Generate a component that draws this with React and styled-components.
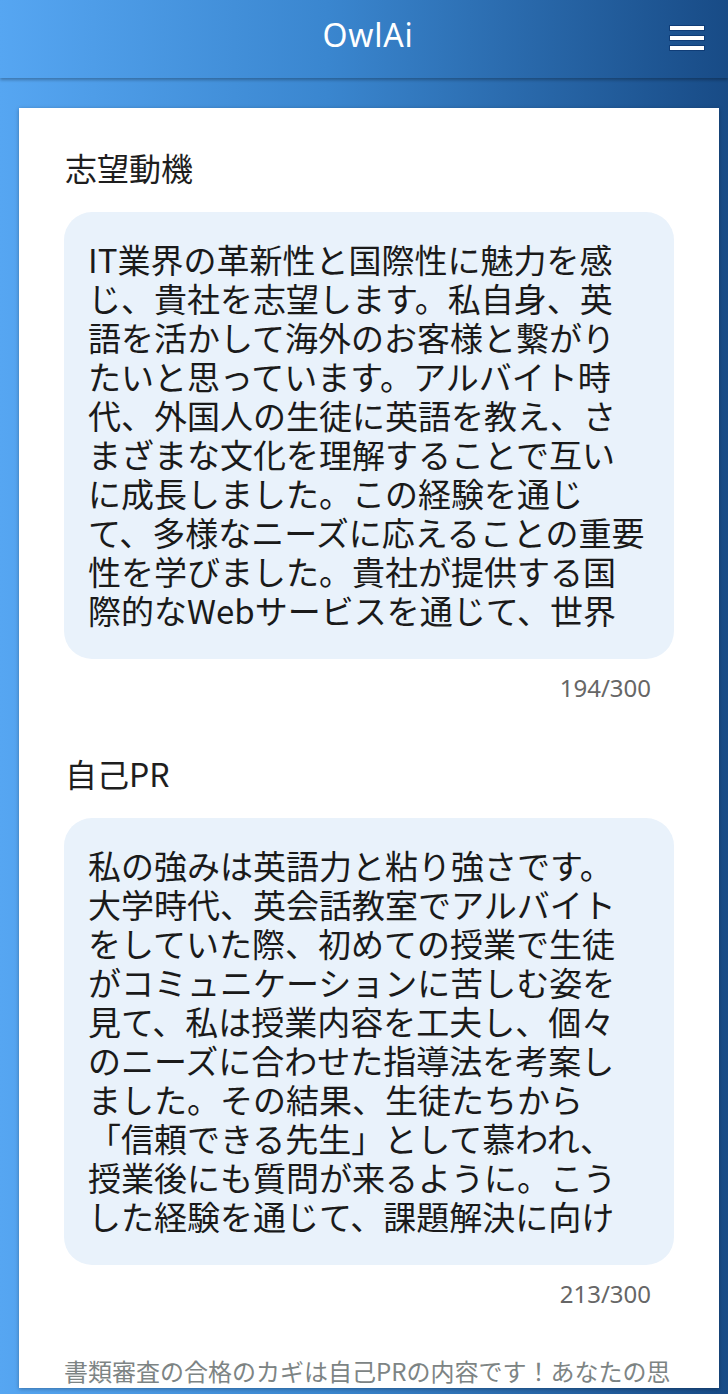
import React from "react";
import styled, { createGlobalStyle } from "styled-components";

const GlobalStyle = createGlobalStyle`
  html, body { margin: 0; padding: 0; }
  body {
    font-family: "Noto Sans CJK JP", "Noto Sans", sans-serif;
    background: linear-gradient(90deg, #56a6f2 0%, #3a86cf 45%, #184b86 100%);
    height: 1394px;
    overflow: hidden;
  }
  * { box-sizing: border-box; }
`;

const Page = styled.div`
  height: 1394px;
  display: flex;
  flex-direction: column;
`;

const Header = styled.header`
  height: 78px;
  flex: none;
  display: grid;
  grid-template-columns: 1fr auto 1fr;
  align-items: center;
  padding: 0 22px 10px 22px;
  background: linear-gradient(90deg, #56a6f2 0%, #3a86cf 45%, #184b86 100%);
  box-shadow: 0 2px 3px rgba(0, 0, 0, 0.28);
  position: relative;
  z-index: 1;
`;

const Title = styled.h1`
  grid-column: 2;
  margin: 0 0 0 8px;
  font-family: "Noto Sans", "Open Sans", sans-serif;
  font-weight: 400;
  font-size: 32px;
  letter-spacing: 0.8px;
  color: #ffffff;
`;

const Burger = styled.button`
  grid-column: 3;
  justify-self: end;
  margin-top: 8px;
  width: 36px;
  padding: 0;
  border: 0;
  background: none;
  display: flex;
  flex-direction: column;
  gap: 6px;
`;

const Bar = styled.span`
  display: block;
  height: 4px;
  width: 34px;
  background: #ffffff;
  box-shadow: 0 0 0 1px rgba(12, 52, 110, 0.7);
`;

const Main = styled.main`
  flex: 1;
  min-height: 0;
  padding: 30px 9px 6px 19px;
`;

const Card = styled.div`
  height: 100%;
  background: #ffffff;
  overflow: hidden;
  padding: 0 45px;
  box-shadow: 0 1px 4px rgba(0, 0, 0, 0.3);
`;

const Section = styled.section`
  display: flex;
  flex-direction: column;
  padding-top: ${(p) => p.$top}px;
`;

const Heading = styled.h2`
  margin: 0;
  font-size: 32px;
  line-height: 48px;
  font-weight: 400;
  color: #1e1e1e;
  padding-left: 1px;
`;

const TextBox = styled.div`
  margin-top: 21px;
  height: 447px;
  background: #e9f2fb;
  border-radius: 28px;
  padding: 28px 16px 0 24px;
  overflow: hidden;
  font-size: 33px;
  line-height: 39px;
  color: #1a1a1a;
  white-space: pre;
`;

const Counter = styled.div`
  margin-top: 11px;
  margin-right: 23px;
  text-align: right;
  font-family: "Noto Sans", sans-serif;
  font-size: 24px;
  line-height: 36px;
  color: #666666;
`;

const Note = styled.p`
  margin: 41px 0 0 0;
  font-size: 24px;
  line-height: 36px;
  color: #7d8484;
`;

const motive = [
  "IT業界の革新性と国際性に魅力を感",
  "じ、貴社を志望します。私自身、英",
  "語を活かして海外のお客様と繋がり",
  "たいと思っています。アルバイト時",
  "代、外国人の生徒に英語を教え、さ",
  "まざまな文化を理解することで互い",
  "に成長しました。この経験を通じ",
  "て、多様なニーズに応えることの重要",
  "性を学びました。貴社が提供する国",
  "際的なWebサービスを通じて、世界",
].join("\n");

const pr = [
  "私の強みは英語力と粘り強さです。",
  "大学時代、英会話教室でアルバイト",
  "をしていた際、初めての授業で生徒",
  "がコミュニケーションに苦しむ姿を",
  "見て、私は授業内容を工夫し、個々",
  "のニーズに合わせた指導法を考案し",
  "ました。その結果、生徒たちから",
  "「信頼できる先生」として慕われ、",
  "授業後にも質問が来るように。こう",
  "した経験を通じて、課題解決に向け",
].join("\n");

export default function App() {
  return (
    <>
      <GlobalStyle />
      <Page>
        <Header>
          <Title>OwlAi</Title>
          <Burger aria-label="menu">
            <Bar />
            <Bar />
            <Bar />
          </Burger>
        </Header>
        <Main>
          <Card>
            <Section $top={35}>
              <Heading>志望動機</Heading>
              <TextBox>{motive}</TextBox>
              <Counter>194/300</Counter>
            </Section>
            <Section $top={43}>
              <Heading>自己PR</Heading>
              <TextBox>{pr}</TextBox>
              <Counter>213/300</Counter>
            </Section>
            <Note>書類審査の合格のカギは自己PRの内容です！あなたの思</Note>
          </Card>
        </Main>
      </Page>
    </>
  );
}
